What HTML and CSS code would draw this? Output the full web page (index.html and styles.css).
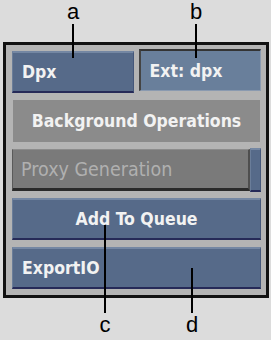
FILE: index.html
```html
<!DOCTYPE html>
<html>
<head>
    <meta charset="utf-8">
    <link rel="stylesheet" href="styles.css">
</head>
<body>
    <div class="figure">
        <div class="callout top" style="left:63px"><span>a</span><i></i></div>
        <div class="callout top" style="left:186px"><span>b</span><i></i></div>

        <div class="panel">
            <div class="row split">
                <div class="btn blue">Dpx</div>
                <div class="field">Ext: dpx</div>
            </div>
            <div class="row">
                <div class="label">Background Operations</div>
            </div>
            <div class="row proxy">
                <div class="btn grey">Proxy Generation</div>
                <div class="btn blue strip"></div>
            </div>
            <div class="row">
                <div class="btn blue center">Add To Queue</div>
            </div>
            <div class="row">
                <div class="btn blue">ExportIO</div>
            </div>
        </div>

        <div class="callout bottom" style="left:95px"><i></i><span>c</span></div>
        <div class="callout bottom short" style="left:182px"><i></i><span>d</span></div>
    </div>
</body>
</html>
```

FILE: styles.css
```css
body {
    margin: 0;
    background-color: #dcdcdc;
    font-family: "DejaVu Sans Condensed", "DejaVu Sans", sans-serif;
}

.figure {
    position: relative;
    width: 271px;
    height: 340px;
    padding-top: 42px;
    box-sizing: border-box;
}

.panel {
    margin-left: 3px;
    width: 266px;
    height: 256px;
    box-sizing: border-box;
    border: 3px solid #111;
    background-color: #b4b4b4;
    padding: 6px 5px 0 6px;
    display: flex;
    flex-direction: column;
    gap: 7px;
}

.row {
    display: flex;
    height: 42px;
}

.row.split {
    gap: 5px;
}

.btn,
.field,
.label {
    flex: 1;
    display: flex;
    align-items: center;
    box-sizing: border-box;
    color: #f2f2f2;
    font-weight: bold;
    font-size: 17.5px;
    padding-left: 9px;
    white-space: nowrap;
}

.blue {
    background-color: #566a89;
    border-top: 2px solid #7487a3;
    border-bottom: 2px solid #262a58;
    border-left: 1px solid #6a7d99;
    border-right: 1px solid #45577a;
}

.field {
    background-color: #697f9b;
    border-top: 2px solid #333;
    border-left: 2px solid #444;
    border-right: 1px solid #8a9ab0;
    border-bottom: 1px solid #8a9ab0;
    margin-top: -2px;
    margin-bottom: 2px;
}

.label {
    justify-content: center;
    padding-left: 0;
    background-color: #8b8b8b;
    margin-left: 1px;
    margin-right: 1px;
}

.grey {
    background-color: #7a7a7a;
    color: #b0b0b0;
    font-weight: normal;
    font-size: 19.5px;
    padding-left: 8px;
    border-top: 1px solid #8c8c8c;
    border-left: 1px solid #5a5a5a;
    border-right: 2px solid #4e4e4e;
    border-bottom: 3px solid #2a2a2a;
}

.strip {
    flex: 0 0 11px;
    padding: 0;
    margin-top: -1px;
    margin-bottom: -1px;
}

.center {
    justify-content: center;
    padding-left: 0;
}

.callout {
    position: absolute;
    width: 20px;
    display: flex;
    flex-direction: column;
    align-items: center;
    color: #000;
    font-family: "Liberation Sans", Arial, sans-serif;
    font-size: 22px;
    line-height: 20px;
}

.callout i {
    display: block;
    width: 2px;
    background-color: #000;
}

.callout.top {
    top: 2px;
}

.callout.top span {
    height: 22px;
}

.callout.top i {
    height: 34px;
}

.callout.bottom {
    top: 225px;
}

.callout.bottom i {
    height: 88px;
    margin-bottom: 2px;
}

.callout.bottom.short {
    top: 268px;
}

.callout.bottom.short i {
    height: 45px;
}
```
